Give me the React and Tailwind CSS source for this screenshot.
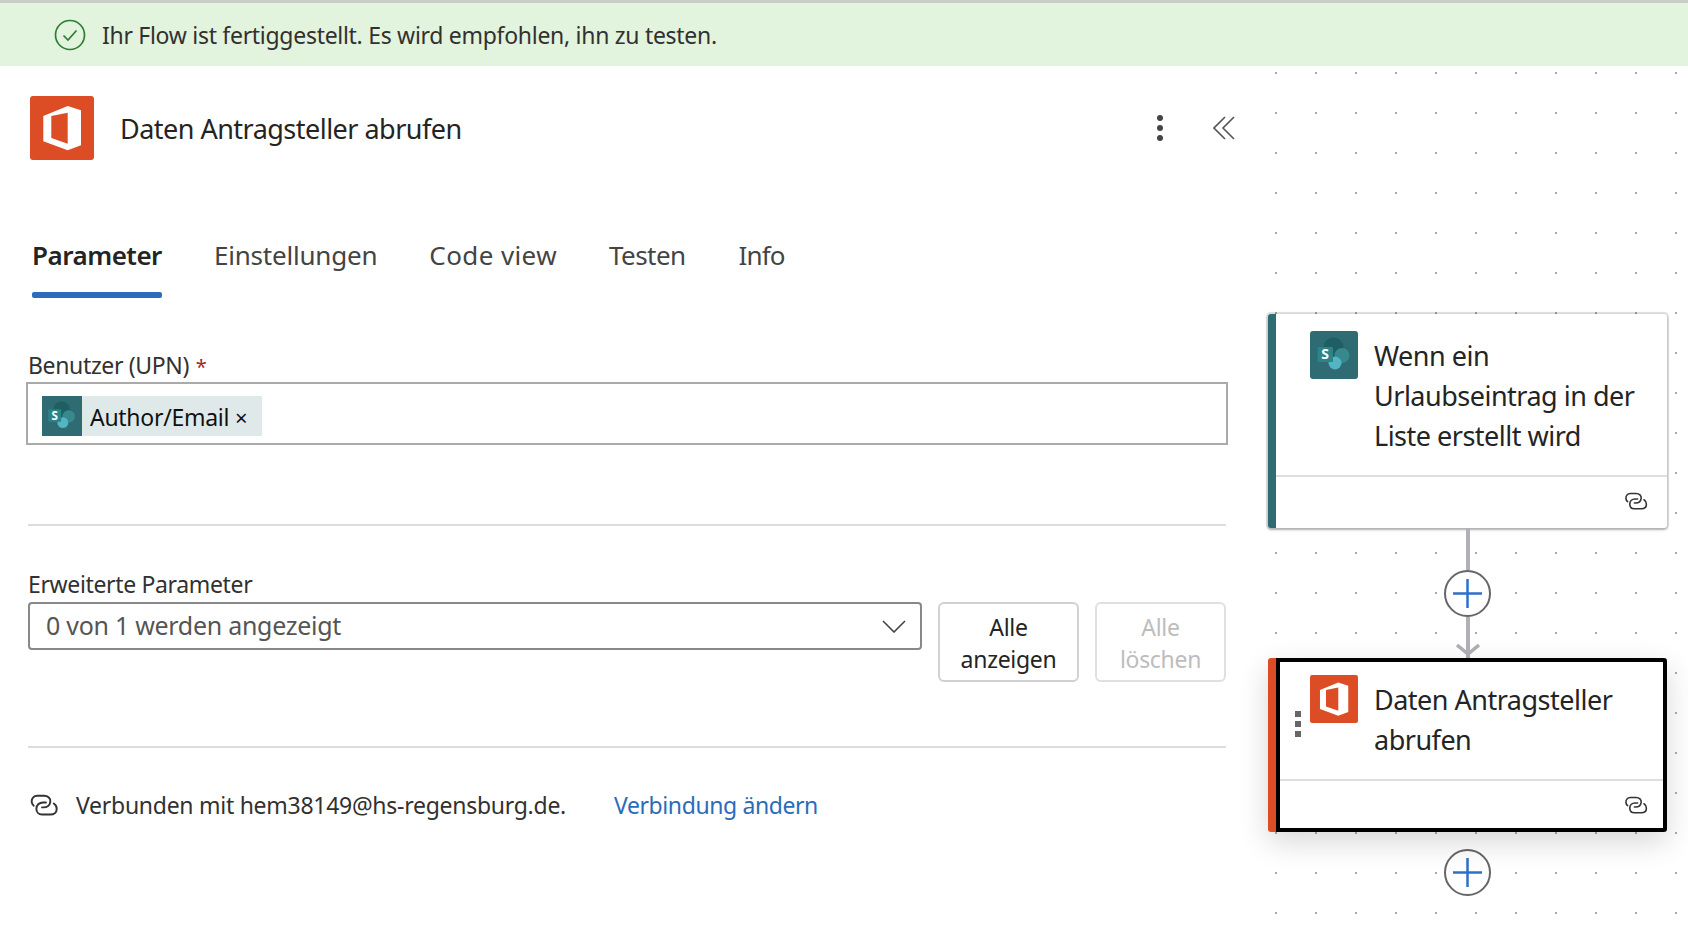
import React from 'react';

const OfficeIcon = ({ className }) => (
  <svg viewBox="0 0 64 64" className={className}>
    <rect width="64" height="64" rx="3" fill="#dc4c25" />
    <path
      fillRule="evenodd"
      fill="#fff"
      d="M13.3 20 L37.7 10 L51 14.3 V49.3 L37.7 54.3 L13.3 45.3 Z M37.7 16.7 L21.3 20 V42 L37.7 47.7 Z"
    />
  </svg>
);

const SharePointIcon = ({ className, rounded = 2 }) => (
  <svg viewBox="0 0 48 48" className={className}>
    <rect width="48" height="48" rx={rounded} fill="#2f6b72" />
    <circle cx="23.5" cy="16.5" r="10" fill="#1f5f64" />
    <circle cx="32" cy="24.5" r="7.5" fill="#37898d" />
    <circle cx="25" cy="32" r="6.5" fill="#55b4c2" />
    <rect x="7.5" y="16" width="15.5" height="15" rx="1" fill="#2a8488" />
    <text x="15.2" y="28.3" textAnchor="middle" fontSize="14" fontWeight="700" fill="#fff" fontFamily="Noto Sans, sans-serif">S</text>
  </svg>
);

const LinkIcon = ({ className }) => (
  <svg viewBox="4 3 28 22.5" fill="none" stroke="currentColor" strokeWidth="2" strokeLinecap="round" className={className}>
    <path d="M7.5 15 C5 13 4.5 9 7 6.5 C8 5.3 9.5 4.8 11 4.8 H18 C22 4.8 25 7.5 24.5 11 C24 14.5 21 16.7 17.5 16.7 H16" />
    <path d="M20 11.7 H17 C13 11.7 10.2 14.5 10.2 18 C10.2 21.5 12.5 24 16 24 H24.5 C28.5 24 31 21.5 31 18.3 C31 15.8 29.8 13.8 28 12.7" />
  </svg>
);

const AddButton = () => (
  <div className="w-[47px] h-[47px] rounded-full border-2 border-[#666] bg-white flex items-center justify-center shrink-0">
    <svg viewBox="0 0 28 28" className="w-[29px] h-[29px]" stroke="#2b70c9" strokeWidth="2.4">
      <path d="M14 0 V28 M0 14 H28" />
    </svg>
  </div>
);

const tabs = [
  { label: 'Einstellungen', style: 'ml-[52px] tracking-[-0.2px]' },
  { label: 'Code view', style: 'ml-[52px] tracking-[0.4px]' },
  { label: 'Testen', style: 'ml-[52px] tracking-[-0.55px]' },
  { label: 'Info', style: 'ml-[53px] tracking-[-0.9px]' },
];

export default function App() {
  return (
    <div className="w-[1688px] h-[930px] overflow-hidden bg-white flex flex-col font-['Noto_Sans',sans-serif] text-[#242424]">
      {/* Success banner */}
      <div className="h-[66px] shrink-0 bg-[#e2f3de] border-t-[3px] border-[#c9cfc8] flex items-center pl-[54px]">
        <svg viewBox="0 0 32 32" fill="none" stroke="#2e7d32" strokeWidth="1.7" className="w-[32px] h-[32px] shrink-0">
          <circle cx="16" cy="16" r="14.5" />
          <path d="M9.5 16.5 L14 21 L22.5 11.5" />
        </svg>
        <span className="ml-[16px] mt-[2px] text-[23px] tracking-[-0.29px] text-[#323130]">Ihr Flow ist fertiggestellt. Es wird empfohlen, ihn zu testen.</span>
      </div>

      <div className="flex flex-1 min-h-0">
        {/* Left panel */}
        <div className="w-[1250px] shrink-0 bg-white pl-[28px]">
          <div className="mt-[30px] h-[64px] flex items-center pr-[15px]">
            <OfficeIcon className="w-[64px] h-[64px] ml-[2px] shrink-0" />
            <span className="ml-[26px] mt-[2px] text-[27px] tracking-[-0.52px]">Daten Antragsteller abrufen</span>
            <svg viewBox="0 0 6 26" className="w-[6px] h-[26px] ml-auto shrink-0" fill="#444">
              <circle cx="3" cy="3" r="3" />
              <circle cx="3" cy="13" r="3" />
              <circle cx="3" cy="23" r="3" />
            </svg>
            <svg viewBox="0 0 22 24" fill="none" stroke="#555" strokeWidth="1.6" className="w-[22px] h-[24px] ml-[50px] shrink-0">
              <path d="M12 1 L1 12 L12 23 M21 1 L10 12 L21 23" />
            </svg>
          </div>

          {/* Tabs */}
          <div className="mt-[75px] flex items-start pl-[4px] text-[26px] leading-[40px] text-[#444]">
            <div className="flex flex-col">
              <span className="font-semibold text-[#242424] tracking-[-0.5px]">Parameter</span>
              <div className="mt-[17px] h-[6px] rounded-[2px] bg-[#2f6bbd]" />
            </div>
            {tabs.map((tab) => (
              <span key={tab.label} className={tab.style}>{tab.label}</span>
            ))}
          </div>

          {/* Benutzer */}
          <div className="mt-[51px] text-[23px] leading-[32px] tracking-[-0.35px] text-[#323130]">
            Benutzer (UPN) <span className="ml-[1px] text-[20px] text-[#a4262c]">*</span>
          </div>
          <div className="-ml-[2px] -mt-[1px] w-[1202px] h-[63px] border-2 border-[#aaa] flex items-center pl-[14px]">
            <div className="mt-[5px] h-[40px] bg-[#e0e9ea] flex items-center pr-[14px]">
              <SharePointIcon className="w-[40px] h-[40px]" rounded={0} />
              <span className="ml-[8px] mt-[2px] text-[23px] tracking-[-0.28px] text-[#111]">Author/Email</span>
              <span className="ml-[6px] mt-[2px] text-[22px] text-[#111]">×</span>
            </div>
          </div>
          <div className="mt-[79px] w-[1198px] h-[2px] bg-[#dcdcdc]" />

          {/* Erweiterte Parameter */}
          <div className="mt-[42px] text-[23px] leading-[32px] tracking-[-0.35px] text-[#323130]">Erweiterte Parameter</div>
          <div className="mt-[2px] flex items-start">
            <div className="w-[894px] h-[48px] rounded-[4px] border-2 border-[#888] flex items-center justify-between pl-[16px] pr-[14px] text-[25px] tracking-[-0.28px] text-[#555]">
              <span>0 von 1 werden angezeigt</span>
              <svg viewBox="0 0 24 13" fill="none" stroke="#444" strokeWidth="1.6" className="w-[24px] h-[13px] shrink-0">
                <path d="M1 1 L12 12 L23 1" />
              </svg>
            </div>
            <button className="ml-[16px] w-[141px] h-[80px] pt-[1px] rounded-[6px] border-2 border-[#d1d1d1] text-[23px] leading-[32px] tracking-[-0.3px] text-[#242424]">
              Alle<br />anzeigen
            </button>
            <button className="ml-[16px] w-[131px] h-[80px] pt-[1px] rounded-[6px] border-2 border-[#e0e0e0] text-[23px] leading-[32px] tracking-[-0.3px] text-[#bdbdbd]">
              Alle<br />löschen
            </button>
          </div>
          <div className="mt-[64px] w-[1198px] h-[2px] bg-[#dcdcdc]" />

          {/* Verbindung */}
          <div className="mt-[41px] flex items-center h-[32px] text-[23px] tracking-[-0.27px] text-[#323130]">
            <LinkIcon className="w-[28px] h-[22px] ml-[2px] shrink-0 text-[#333]" />
            <span className="ml-[18px]">Verbunden mit hem38149@hs-regensburg.de.</span>
            <span className="ml-[48px] tracking-[-0.4px] text-[#2b6cb8]">Verbindung ändern</span>
          </div>
        </div>

        {/* Flow canvas */}
        <div className="flex-1 bg-white bg-[radial-gradient(#aaa_1px,transparent_1.5px)] bg-[size:40px_40px] bg-[position:6px_-13px] pl-[18px] pt-[248px]">
          <div className="w-[399px] flex flex-col items-center">
            {/* Trigger card */}
            <div className="w-full h-[214px] bg-white rounded-[3px] border-l-[8px] border-[#2f6b72] shadow-[0_0_1px_2px_rgba(0,0,0,0.14),0_2px_3px_rgba(0,0,0,0.2)] flex flex-col">
              <div className="h-[161px] shrink-0 flex pl-[34px] pt-[17px]">
                <SharePointIcon className="w-[48px] h-[48px] shrink-0" rounded={3} />
                <div className="ml-[16px] mt-[5px] text-[27px] leading-[40px] tracking-[-0.5px]">
                  Wenn ein<br />Urlaubseintrag in der<br />Liste erstellt wird
                </div>
              </div>
              <div className="h-[2px] bg-[#dedede]" />
              <div className="flex-1 flex items-center justify-end pr-[18px] pb-[3px]">
                <LinkIcon className="w-[26px] h-[18px] text-[#333]" />
              </div>
            </div>

            <div className="w-[4px] h-[42px] bg-[#b0b0b6] shrink-0" />
            <AddButton />
            <div className="relative w-[4px] h-[41px] bg-[#b0b0b6] shrink-0">
              <svg viewBox="0 0 24 12" fill="none" stroke="#b0b0b6" strokeWidth="3.5" className="absolute left-[-10px] bottom-[2px] w-[24px] h-[12px]">
                <path d="M1 1 L12 10 L23 1" />
              </svg>
            </div>

            {/* Selected action card */}
            <div className="relative w-full h-[174px] bg-white rounded-[3px] border-l-[8px] border-[#dc4c25] shadow-[0_10px_30px_rgba(0,0,0,0.16)]">
              <div className="h-full rounded-r-[3px] border-[4px] border-black flex flex-col">
                <div className="h-[117px] shrink-0 flex pl-[30px] pt-[13px]">
                  <OfficeIcon className="w-[48px] h-[48px] shrink-0" />
                  <div className="ml-[16px] mt-[5px] text-[27px] leading-[40px] tracking-[-0.5px]">
                    Daten Antragsteller<br />abrufen
                  </div>
                </div>
                <div className="h-[2px] bg-[#dedede]" />
                <div className="flex-1 flex items-center justify-end pr-[14px]">
                  <LinkIcon className="w-[26px] h-[18px] text-[#333]" />
                </div>
              </div>
              <div className="absolute left-[19px] top-[53px] flex flex-col gap-[4px]">
                <div className="w-[6px] h-[6px] bg-[#666]" />
                <div className="w-[6px] h-[6px] bg-[#666]" />
                <div className="w-[6px] h-[6px] bg-[#666]" />
              </div>
            </div>

            <div className="mt-[17px]">
              <AddButton />
            </div>
          </div>
        </div>
      </div>
    </div>
  );
}
